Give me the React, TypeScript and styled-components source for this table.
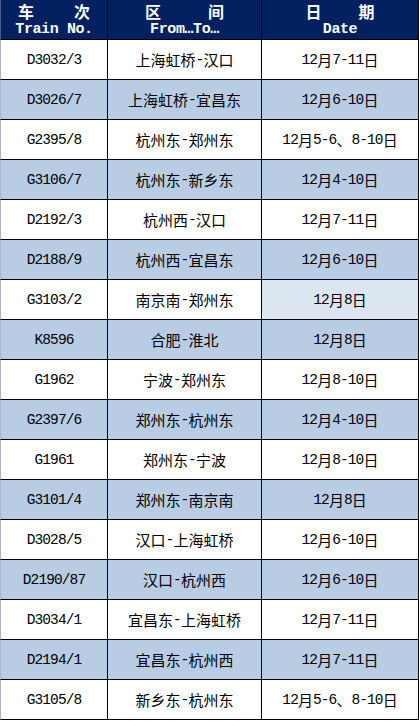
import React from 'react';
import styled, { createGlobalStyle } from 'styled-components';

type Trip = { no: string; route: string; date: string; marked?: boolean };

const trips: Trip[] = [
	{ no: 'D3032/3', route: '上海虹桥-汉口', date: '12月7-11日' },
	{ no: 'D3026/7', route: '上海虹桥-宜昌东', date: '12月6-10日' },
	{ no: 'G2395/8', route: '杭州东-郑州东', date: '12月5-6、8-10日' },
	{ no: 'G3106/7', route: '杭州东-新乡东', date: '12月4-10日' },
	{ no: 'D2192/3', route: '杭州西-汉口', date: '12月7-11日' },
	{ no: 'D2188/9', route: '杭州西-宜昌东', date: '12月6-10日' },
	{ no: 'G3103/2', route: '南京南-郑州东', date: '12月8日', marked: true },
	{ no: 'K8596', route: '合肥-淮北', date: '12月8日' },
	{ no: 'G1962', route: '宁波-郑州东', date: '12月8-10日' },
	{ no: 'G2397/6', route: '郑州东-杭州东', date: '12月4-10日' },
	{ no: 'G1961', route: '郑州东-宁波', date: '12月8-10日' },
	{ no: 'G3101/4', route: '郑州东-南京南', date: '12月8日' },
	{ no: 'D3028/5', route: '汉口-上海虹桥', date: '12月6-10日' },
	{ no: 'D2190/87', route: '汉口-杭州西', date: '12月6-10日' },
	{ no: 'D3034/1', route: '宜昌东-上海虹桥', date: '12月7-11日' },
	{ no: 'D2194/1', route: '宜昌东-杭州西', date: '12月7-11日' },
	{ no: 'G3105/8', route: '新乡东-杭州东', date: '12月5-6、8-10日' },
];

const headings = [
	{ zh: ['车', '次'], en: 'Train No.', gap: 40 },
	{ zh: ['区', '间'], en: 'From…To…', gap: 47 },
	{ zh: ['日', '期'], en: 'Date', gap: 37 },
];

const HAN = /[\u3000-\u303f\u4e00-\u9fff\uff00-\uffef]/;

// CJK runs get the larger Han font, the rest stays monospaced
const mixed = (text: string) =>
	text.split(/([\u3000-\u303f\u4e00-\u9fff\uff00-\uffef]+)/).filter(Boolean).map((part, i) =>
		HAN.test(part) ? <Han key={i}>{part}</Han> : part,
	);

const App: React.FC = () => (
	<>
		<GlobalStyle />
		<Sheet>
			{headings.map(h => (
				<HeadCell key={h.en}>
					<HeadZh $gap={h.gap}>
						<span>{h.zh[0]}</span>
						<span>{h.zh[1]}</span>
					</HeadZh>
					<HeadEn>{h.en}</HeadEn>
				</HeadCell>
			))}
			{trips.map((t, i) => (
				<React.Fragment key={t.no}>
					<Cell $shaded={i % 2 === 1}>{mixed(t.no)}</Cell>
					<Cell $shaded={i % 2 === 1}>{mixed(t.route)}</Cell>
					<Cell $shaded={i % 2 === 1} $marked={t.marked}>{mixed(t.date)}</Cell>
				</React.Fragment>
			))}
		</Sheet>
	</>
);

export default App;

const GlobalStyle = createGlobalStyle`
	body {
		margin: 0;
		background: #ffffff;
	}
`;

const Sheet = styled.div`
	display: grid;
	grid-template-columns: 108px 154px 157px;
	grid-auto-rows: 40px;
	width: 419px;
	font-family: "Liberation Mono", "Noto Sans CJK SC", monospace;
`;

const HeadCell = styled.div`
	display: flex;
	flex-direction: column;
	align-items: center;
	justify-content: center;
	gap: 3px;
	box-sizing: border-box;
	padding-bottom: 1px;

	background: #002060;
	color: #ffffff;
	border-right: 1px solid #000000;
	border-bottom: 1px solid #000000;

	&:first-child {
		border-left: 1px solid #4a5f8c;
	}
`;

const HeadZh = styled.div<{ $gap: number }>`
	display: flex;
	gap: ${p => p.$gap}px;

	font-family: "Noto Sans CJK SC", sans-serif;
	font-size: 16px;
	font-weight: 700;
	line-height: 17px;
`;

const HeadEn = styled.div`
	font-size: 15px;
	font-weight: 700;
	line-height: 13px;
	letter-spacing: -0.4px;
`;

const Cell = styled.div<{ $shaded?: boolean; $marked?: boolean }>`
	display: flex;
	align-items: center;
	justify-content: center;
	box-sizing: border-box;

	background: ${p => (p.$marked ? '#dce6f1' : p.$shaded ? '#b8cce4' : '#ffffff')};
	color: #000000;
	border-right: 1px solid #000000;
	border-bottom: 1px solid #000000;
	font-size: 14.5px;
	letter-spacing: -0.9px;
	white-space: nowrap;

	&:nth-child(3n + 1) {
		border-left: 1px solid #a9b8cf;
	}
`;

const Han = styled.span`
	font-family: "Noto Sans CJK SC", sans-serif;
	font-size: 15px;
	letter-spacing: 0;
`;
